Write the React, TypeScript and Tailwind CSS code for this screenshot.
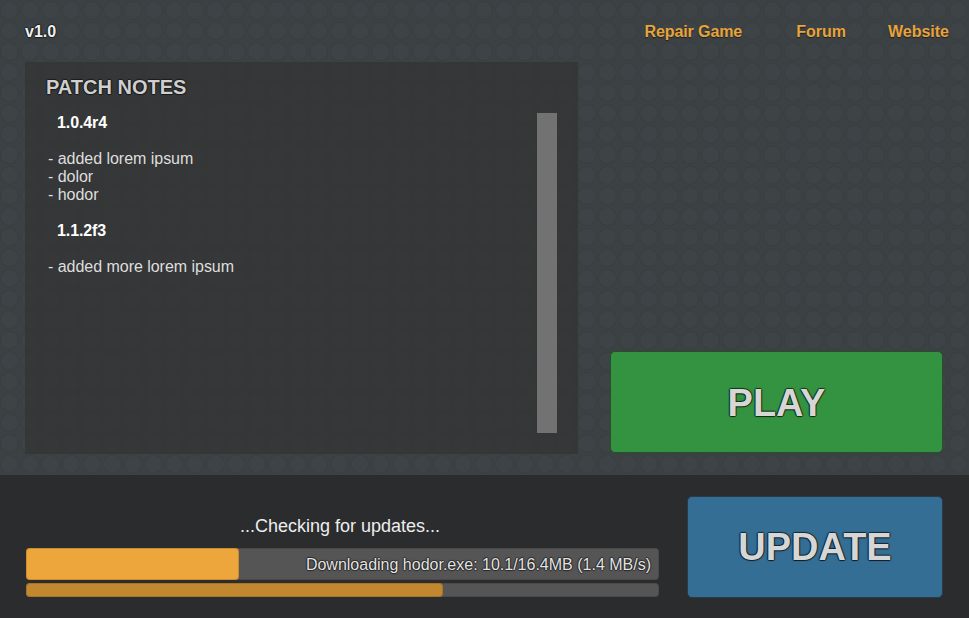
const outline =
  "[text-shadow:1px_0_1px_rgba(0,0,0,0.45),-1px_0_1px_rgba(0,0,0,0.45),0_1px_1px_rgba(0,0,0,0.5),0_-1px_1px_rgba(0,0,0,0.45)]";
const heavyOutline =
  "[text-shadow:1px_0_1px_rgba(0,0,0,0.6),-1px_0_1px_rgba(0,0,0,0.6),0_1px_1px_rgba(0,0,0,0.7),0_-1px_1px_rgba(0,0,0,0.6)]";
const softShadow = "[text-shadow:0_1px_1px_rgba(0,0,0,0.5)]";

const notes = [
  { version: "1.0.4r4", changes: ["added lorem ipsum", "dolor", "hodor"] },
  { version: "1.1.2f3", changes: ["added more lorem ipsum"] },
];

function Header() {
  return (
    <header
      className={`flex h-[62px] shrink-0 items-center justify-between pt-px pr-5 pl-[25px] text-[16px] leading-[18px] font-bold ${softShadow}`}
    >
      <span className={`text-[#f0f0f0] ${outline}`}>v1.0</span>
      <nav className="flex text-[#e9a33b]">
        <a className="mr-[54px] tracking-[-0.1px]">Repair Game</a>
        <a className="mr-[42px]">Forum</a>
        <a>Website</a>
      </nav>
    </header>
  );
}

function PatchNotes() {
  return (
    <section className="flex h-[392px] w-[553px] justify-between bg-[#333435]/80 pr-[21px] pl-5">
      <div className="pt-[14px]">
        <h1 className={`pl-px text-[20px] leading-[23px] font-bold text-[#cfcfcf] ${outline}`}>
          PATCH NOTES
        </h1>
        <div className="mt-[15px] ml-[3px] text-[16px] leading-[18px] text-[#dedede]">
          {notes.map((note) => (
            <div key={note.version} className="mb-[18px]">
              <h2 className="mb-[18px] ml-[9px] font-bold tracking-[-0.1px] text-white">
                {note.version}
              </h2>
              {note.changes.map((change) => (
                <p key={change} className="tracking-[-0.03px]">
                  - {change}
                </p>
              ))}
            </div>
          ))}
        </div>
      </div>
      <div className="mt-[51px] h-[320px] w-5 bg-[#727272]" />
    </section>
  );
}

function Progress() {
  return (
    <div className="w-[633px]">
      <p className="mt-[41px] mr-[5px] text-center text-[18px] leading-[21px] text-[#ededed]">
        ...Checking for updates...
      </p>
      <div className="mt-[11px] flex h-8 rounded bg-[#555555] shadow-[inset_0_0_0_1px_rgba(0,0,0,0.12)]">
        <div className="w-[213px] rounded bg-[#eda63c] shadow-[inset_0_0_0_1px_rgba(80,40,0,0.2)]" />
        <span
          className={`flex-1 pr-2 text-right text-[16px] leading-[33px] text-[#e4e4e4] ${outline}`}
        >
          Downloading hodor.exe: 10.1/16.4MB (1.4 MB/s)
        </span>
      </div>
      <div className="mt-[3px] flex h-[14px] rounded bg-[#555555] shadow-[inset_0_0_0_1px_rgba(0,0,0,0.12)]">
        <div className="w-[417px] rounded bg-[#c18830] shadow-[inset_0_0_0_1px_rgba(80,40,0,0.2)]" />
      </div>
    </div>
  );
}

export default function App() {
  return (
    <main className="flex h-[618px] w-[969px] flex-col overflow-hidden bg-[#2b2c2e] font-['Liberation_Sans',Arial,sans-serif]">
      <div className="flex h-[475px] shrink-0 flex-col bg-[#3c4143] bg-[radial-gradient(circle,#3d4346_7.9px,#393e40_8.7px,#393e40_9.1px,#3c4143_9.9px)] bg-[length:20.63px_20.63px] bg-[position:-1px_0px]">
        <Header />
        <div className="flex items-start justify-between pr-[26px] pl-[25px]">
          <PatchNotes />
          <button
            className={`mt-[289px] h-[102px] w-[333px] rounded-[5px] border border-[#264f2c] bg-[#349340] pt-px text-[38px] leading-none font-bold text-[#d6d6d6] ${heavyOutline}`}
          >
            PLAY
          </button>
        </div>
      </div>
      <footer className="flex flex-1 items-start justify-between pr-[26px] pl-[26px]">
        <Progress />
        <button
          className={`mt-[21px] h-[102px] w-[256px] rounded-[5px] border border-[#283b48] bg-[#346e94] text-[38px] leading-none font-bold text-[#d6d6d6] ${heavyOutline}`}
        >
          UPDATE
        </button>
      </footer>
    </main>
  );
}
